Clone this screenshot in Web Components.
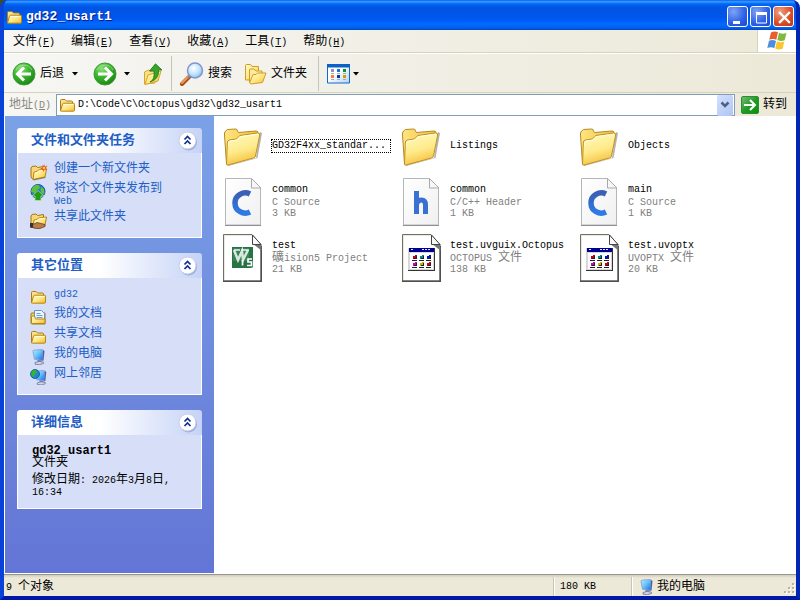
<!DOCTYPE html>
<html lang="zh-CN">
<head>
<meta charset="utf-8">
<title>gd32_usart1</title>
<style>
html, body { margin: 0; }
body {
  min-height: 100vh;
  background: linear-gradient(90deg, #3c4d2b 50%, #fff 50%);
  color: #000;
  font: 12px/12px "Liberation Mono", "Noto Sans CJK SC", monospace;
}
small { font-size: 10px; line-height: 10px; }
</style>
</head>
<body>
<xp-window>
  <title-bar slot="title">gd32_usart1</title-bar>
  <menu-bar slot="menu">
    <menu-item key="F">文件</menu-item>
    <menu-item key="E">编辑</menu-item>
    <menu-item key="V">查看</menu-item>
    <menu-item key="A">收藏</menu-item>
    <menu-item key="T">工具</menu-item>
    <menu-item key="H">帮助</menu-item>
  </menu-bar>
  <tool-bar slot="tools">
    <tool-button icon="back" drop>后退</tool-button>
    <tool-button icon="forward" drop label="前进"></tool-button>
    <tool-button icon="up" label="向上"></tool-button>
    <tool-divider></tool-divider>
    <tool-button icon="search">搜索</tool-button>
    <tool-button icon="folders">文件夹</tool-button>
    <tool-divider></tool-divider>
    <tool-button icon="views" drop label="查看"></tool-button>
  </tool-bar>
  <address-bar slot="address" path="D:\Code\C\Octopus\gd32\gd32_usart1"></address-bar>
  <side-bar slot="side">
    <task-panel heading="文件和文件夹任务">
      <task-link icon="newfolder">创建一个新文件夹</task-link>
      <task-link icon="publish">将这个文件夹发布到 <small>Web</small></task-link>
      <task-link icon="share">共享此文件夹</task-link>
    </task-panel>
    <task-panel heading="其它位置">
      <task-link icon="folder16"><small>gd32</small></task-link>
      <task-link icon="docs">我的文档</task-link>
      <task-link icon="folder16">共享文档</task-link>
      <task-link icon="computer">我的电脑</task-link>
      <task-link icon="network">网上邻居</task-link>
    </task-panel>
    <task-panel heading="详细信息">
      <folder-details name="gd32_usart1" kind="文件夹">修改日期<small>: 2026</small>年<small>3</small>月<small>8</small>日<small>,</small> <small>16:34</small></folder-details>
    </task-panel>
  </side-bar>
  <file-view slot="files">
    <file-item icon="folder" name="GD32F4xx_standar..." selected></file-item>
    <file-item icon="folder" name="Listings"></file-item>
    <file-item icon="folder" name="Objects"></file-item>
    <file-item icon="cfile" name="common" size="3 KB"><small>C Source</small></file-item>
    <file-item icon="hfile" name="common" size="1 KB"><small>C/C++ Header</small></file-item>
    <file-item icon="cfile" name="main" size="1 KB"><small>C Source</small></file-item>
    <file-item icon="uvision" name="test" size="21 KB">礦<small>ision5 Project</small></file-item>
    <file-item icon="generic" name="test.uvguix.Octopus" size="138 KB"><small>OCTOPUS </small>文件</file-item>
    <file-item icon="generic" name="test.uvoptx" size="20 KB"><small>UVOPTX </small>文件</file-item>
  </file-view>
  <status-bar slot="status">
    <span slot="count"><small>9 </small>个对象</span>
    <small slot="size">180 KB</small>
    <span slot="zone">我的电脑</span>
  </status-bar>
</xp-window>

<script>
const yellow = `<defs><linearGradient id="y" x1="0" y1="0" x2="1" y2="1"><stop offset="0" stop-color="#fffbd2"/><stop offset=".5" stop-color="#ffe887"/><stop offset="1" stop-color="#f3b92c"/></linearGradient></defs>`;
const smallFolder = `<path d="M1.500 14V3.500q0-1 1-1h3.500l1.500 1.500h5q1 0 1 1v2" fill="#fbe38c" stroke="#b07a14"/><path d="M1.500 14 3.500 7q.3-.8 1-.8h10q1 0 1 1v6q0 1-1 1H2.500q-1 0-1-.2z" fill="url(#y)" stroke="#b8860f"/><path d="M4.500 7.500h9.500" stroke="#fffbe0"/>`;
const tiltFolder = `<path d="M3 15.500 1 13V4l1-1.500 4-.5 1.500 1.500 6-1v3z" fill="#f7d777" stroke="#a87410"/><path d="M3 15.500 4 8l3-.5 1.500-1.500 8-1-1.500 8z" fill="url(#y)" stroke="#b8860f"/><path d="M5 9l2.500-.5L9 7l6-.8" fill="none" stroke="#fffbe0"/><path d="M3.500 16l12-2.500" stroke="#5e5030" stroke-opacity=".6"/>`;
const monitor = `<path d="M3 2.200Q3 1.300 4 1.200L12 .5q1 0 1 1L12.300 11.500 4.500 10.300z" fill="url(#m)" stroke="#8ba6dc"/><path d="M13 1l1.500 1-1 9.500-1.300.3z" fill="#4c5ca6"/><path d="M7.500 11l4 .6v2l-4-.3z" fill="#6f78a8"/><path d="M5 13.500q4-2 8.500-.3v1.300q-4 2-8.500.7z" fill="#d0d3ea" stroke="#707496" stroke-width=".8"/>`;
const mdefs = `<defs><linearGradient id="m" x1="0" y1="0" x2="1" y2="1"><stop offset="0" stop-color="#b8f0ff"/><stop offset=".5" stop-color="#5fc0fa"/><stop offset="1" stop-color="#1c64d8"/></linearGradient></defs>`;
const greenDisc = `<defs><radialGradient id="g" cx=".35" cy=".25" r=".85"><stop offset="0" stop-color="#8fe07a"/><stop offset=".45" stop-color="#3bb52f"/><stop offset="1" stop-color="#14800f"/></radialGradient></defs><circle cx="12" cy="12" r="11" fill="url(#g)" stroke="#3f9a38"/><path d="M4 8a9 9 0 0 1 16 0" fill="none" stroke="#b9efad" stroke-opacity=".6"/>`;
const page = `<defs><linearGradient id="p" x1="0" y1="0" x2="1" y2="1"><stop offset="0" stop-color="#fff"/><stop offset="1" stop-color="#f0f0f0"/></linearGradient><linearGradient id="b" x1="0" y1="0" x2="0" y2="1"><stop offset="0" stop-color="#3a5fb4"/><stop offset="1" stop-color="#2f7ae6"/></linearGradient></defs><path d="M6.500.500H32l9.500 9.500v37H6.500z" fill="url(#p)" stroke="#b4b7b9"/><path d="M6 47.500h36" stroke="#8c9092"/><path d="M32.500.500v9.500h9.500z" fill="#f7f7f7" stroke="#a7a9ab"/>`;
const darkPage = `<path d="M4.500.500H33l9 10V47H4.500z" fill="#fff" stroke="#6f6f67"/><path d="M5.500 46V1.500H33" fill="none" stroke="#e9e9dd"/><path d="M4 47.250h38.250V12" fill="none" stroke="#505050" stroke-width="1.500"/><path d="M33.500 1v9.500h8.500l.5 6-9-7z" fill="#777"/><path d="M33.500 1v9.500h8.500z" fill="#fafafa" stroke="#444"/>`;
const dots = [['#c00020',15,21],['#008a8a',22,21],['#0010c8',29,21],['#d000c0',15,28],['#c8b000',22,28],['#c80010',29,28]]
  .map(([c,x,y]) => `<path fill="${c}" d="M${x} ${y}h4v4h-4z"/><path fill="#fff" d="M${x} ${y}h2v1h-2z"/><path fill="#222" d="M${x+3} ${y+1}h1v3h-3v-1h2zM${x-1} ${y+5}h5v1h-5z"/>`).join('');

const ICONS = {
  folder16: [16, 16, yellow + smallFolder],
  newfolder: [18, 17, yellow + tiltFolder + `<path d="M14 0l1 2.500 2.500-1-1.500 2.500 1.500 2-2.500-.5L13 8l-.3-2.500L10 4.500l2.700-1.200L12.500.8l1.500 1z" fill="#ee5a1c"/><circle cx="14" cy="4" r="1.200" fill="#ffc35c"/>`],
  publish: [16, 17, `<circle cx="8" cy="7.500" r="7" fill="#2b7bd0" stroke="#17539a"/><path d="M2 4q3-4 7-3l1 3-3 2-2 3-4-1zM11 3l3 2 .5 5-3-1-1-3z" fill="#5fc23c"/><path d="M8 6.500l6 5.500h-3v4.500H5V12H2z" fill="#259a14" stroke="#b9e8a8" stroke-width=".7"/>`],
  share: [17, 17, yellow + tiltFolder + `<path d="M1 12h3l3-1.500 4 1 4 1v2l-5 2H6l-3-1H1z" fill="#b97d44" stroke="#5b3114" stroke-width=".7"/><path d="M0 11h3v4.500H0z" fill="#333"/>`],
  docs: [16, 16, yellow + `<path d="M1 5q0-1 1-1h13v11H2q-1 0-1-1z" fill="#f4cf60" stroke="#a87812"/><path d="M4.500 1.500h7l3 3v8h-10z" fill="#eef6ff" stroke="#6c93c8"/><path d="M6.500 4.500h4m-4 2h6m-6 2h6" stroke="#6aa0dc"/><path d="M1.500 8q0-1 1-1h2l1 3h9.500v4.500H2.500q-1 0-1-1z" fill="url(#y)" stroke="#b8860f"/>`],
  computer: [16, 16, mdefs + monitor],
  network: [17, 16, mdefs + `<g transform="translate(2.500 1) scale(.95)">${monitor}</g><circle cx="5" cy="5" r="4.500" fill="#2382d8" stroke="#124f91" stroke-width=".8"/><path d="M1 4q2-4 5-3l1 3-2 1-1 3-2-1z" fill="#38b32c"/>`],
  back: [24, 24, greenDisc + `<path d="M12 5.500 5.500 12 12 18.500M6.500 12H19" fill="none" stroke="#fff" stroke-width="3"/>`],
  forward: [24, 24, greenDisc + `<path d="M12 5.500 18.500 12 12 18.500M17.500 12H5" fill="none" stroke="#fff" stroke-width="3"/>`],
  up: [20, 22, yellow + `<path d="M1.500 21V9l4-2 2 1.500L12 7v13z" fill="#fbe08a" stroke="#d8a52c"/><path d="M2 21.500 5 12l13-4-3 10z" fill="url(#y)" stroke="#d8a52c"/><path d="M7 19q5-2 4-11H6.500L12.500.8 19 7h-3.500q1 9-8.500 12z" fill="#35a52b" stroke="#1c7618" stroke-width=".8"/>`],
  search: [24, 24, `<defs><radialGradient id="l" cx=".4" cy=".35" r=".7"><stop offset="0" stop-color="#fff"/><stop offset=".6" stop-color="#bfe3fc"/><stop offset="1" stop-color="#7fb7ee"/></radialGradient></defs><path d="M10.500 13.500 2 22" stroke="#a64d17" stroke-width="4" stroke-linecap="round"/><path d="M9.500 13.500 2 21" stroke="#f29a55" stroke-width="2" stroke-linecap="round"/><path d="M11 13l-3 3" stroke="#7f87a0" stroke-width="2"/><circle cx="15" cy="8.500" r="7.500" fill="url(#l)" stroke="#8395cf" stroke-width="1.500"/>`],
  folders: [23, 22, yellow + `<path d="M1.500 17V2.500q0-1 1-1h4l1.500 2h6.500v4L12 17z" fill="url(#y)" stroke="#cf9c28"/><path d="M5.500 19V7q0-1 1-1h3.500l2 2h6v4" fill="#fdea9e" stroke="#cf9c28"/><path d="M5.500 20 9 11.500h3l1.500-1.500h8.500l-3.500 9.500-11.500 1.500z" fill="url(#y)" stroke="#cf9c28"/>`],
  views: [24, 20, `<defs><linearGradient id="v" x1="0" y1="0" x2="1" y2="1"><stop offset=".4" stop-color="#fff"/><stop offset="1" stop-color="#b4d3f5"/></linearGradient></defs><path d="M.5.5h22v18.500H.5z" fill="url(#v)" stroke="#1268cf"/><path d="M0 0h23v3.500H0z" fill="#0c60c8"/><path d="M4 5h3v3H4z" fill="#9a8ccc"/><path d="M10 5h3v3h-3z" fill="#1672e4"/><path d="M16 5h3v3h-3z" fill="#0b9812"/><path d="M4 11h3v3H4z" fill="#ff7846"/><path d="M10 11h3v3h-3z" fill="#0b38a8"/><path d="M16 11h3v3h-3z" fill="#d0a000"/><path d="M4 9.500h3m3 0h3m3 0h3M4 15.500h3m3 0h3m3 0h3" stroke="#aaa"/>`],
  go: [18, 18, `<defs><linearGradient id="o" x1="0" y1="0" x2="1" y2="1"><stop offset="0" stop-color="#79bf79"/><stop offset=".5" stop-color="#219b24"/><stop offset="1" stop-color="#079009"/></linearGradient></defs><rect x=".5" y=".5" width="17" height="17" rx="1.500" fill="url(#o)" stroke="#2e8a36"/><path d="M9 4l5 5-5 5M13 9H3" fill="none" stroke="#fff" stroke-width="2"/>`],
  flag: [20, 20, `<path d="M4 1.500q3.500-2 7-.2L9.300 8.700q-3-1.500-7-.2z" fill="#e8602c"/><path d="M12 1.700q3.500 2 7.500.3l-1.800 7.300q-4 1.500-7.300-.3z" fill="#7fba3c"/><path d="M2 9.700q3.500-1.500 7 .2l-1.700 7.400q-3-1.800-7-.3z" fill="#4a8fe0"/><path d="M10 10.200q3.300 1.900 7.300.3l-1.700 7.300q-4 1.700-7.400-.2z" fill="#f9c62c"/>`],
  chevrons: [20, 20, `<circle cx="10.500" cy="11" r="8.500" fill="#7d8fc4" opacity=".6"/><circle cx="9.500" cy="9.500" r="8.500" fill="#fff" stroke="#c5cee8"/><path d="M6.500 8.500 9.500 5.500l3 3M6.500 13l3-3 3 3" fill="none" stroke="#10308f" stroke-width="1.700"/>`],
  folder: [48, 48, `<defs><linearGradient id="f" x1="0" y1="0" x2=".3" y2="1"><stop offset="0" stop-color="#fffbc0"/><stop offset=".6" stop-color="#ffeb8c"/><stop offset="1" stop-color="#f5c443"/></linearGradient><linearGradient id="k" x1="0" y1="0" x2="1" y2="0"><stop offset="0" stop-color="#ffe582"/><stop offset="1" stop-color="#f0c040"/></linearGradient></defs><path d="M9 44 38.500 36 43 11l-2-1-4 26-28 7z" fill="#555" opacity=".45"/><path d="M7.500 42 5.500 13V11l1-2 2-1.500 8-.5q2 0 2 2l1 1.500L37 9q2.500 0 2 2.500l-3 22z" fill="url(#k)" stroke="#b58a22"/><path d="M7.500 42.500 8.300 21q0-2.500 2-3l7-1 3.500-3.500L38.500 11q2.500-.2 2.200 2L36.500 34q-.3 1.500-2 2L9 43q-1.500.3-1.500-.5z" fill="url(#f)" stroke="#c1901f"/><path d="M9.500 24l.2-3q.2-1.700 2-2l6-.9 3.500-3.400L39 12.200" fill="none" stroke="#fffde6"/>`],
  cfile: [48, 48, page + `<path d="M31 16q-5-2.500-10 .3t-5 8.700 5 8.700 10 .3" fill="none" stroke="url(#b)" stroke-width="5.500"/>`],
  hfile: [48, 48, page + `<path d="M19.500 13v23M19.500 26q1.500-4 5-4 4 0 4 5V36" fill="none" stroke="#3971d2" stroke-width="5"/>`],
  uvision: [48, 48, darkPage + `<path d="M13 13h21v20l-2 1H13z" fill="#287344"/><path d="M14 14h16v13H14z" fill="#4b926a" opacity=".5"/><path d="M15 16l4 10 4-9 1 9 5-10" fill="none" stroke="#d9e8de" stroke-width="2.500"/><path d="M15 16h6m1 0h8" stroke="#edf4ef" stroke-width="1.500"/><path d="M23.500 26v5.500M33 25h-4v3h3.500v3.500H28" fill="none" stroke="#fff" stroke-width="1.700"/>`],
  generic: [48, 48, `<g transform="translate(1 0)">` + darkPage + `<path d="M10 14h27v23H10z" fill="#333"/><path d="M10 14h26v22H10z" fill="#d8d8d8"/><path d="M11 14h25v4H11z" fill="#000090"/><path d="M12 19h23v16H12z" fill="#fff"/><path d="M13 15.500h2m9 0h2m1 0h2m1 0h2" stroke="#e8e8ff"/>${dots}</g>`],
  min: [21, 21, `<path d="M5 14h7v3H5z" fill="#fff"/>`],
  max: [21, 21, `<path d="M5.500 6h10v10h-10z" fill="none" stroke="#fff"/><path d="M5 6.500h11" stroke="#fff" stroke-width="3"/>`],
  close: [21, 21, `<path d="M6 6l9 9M15 6l-9 9" stroke="#fff" stroke-width="2.400" stroke-linecap="square"/>`],
  down: [16, 18, `<path d="M4.500 7.500 8 11l3.500-3.500" fill="none" stroke="#4d6185" stroke-width="2.500"/>`],
  caret: [6, 4, `<path d="M0 0h6L3 3.500z"/>`],
  grip: [12, 12, [[8,0],[4,4],[8,4],[0,8],[4,8],[8,8]].map(([x,y]) => `<path d="M${x+1} ${y+1}h2v2h-2z" fill="#fff"/><path d="M${x} ${y}h2v2h-2z" fill="#b8b4a2"/>`).join('')]
};

function define(tag, css, markup) {
  customElements.define(tag, class extends HTMLElement {
    connectedCallback() {
      if (this.shadowRoot) return;
      const t = document.createElement('template');
      t.innerHTML = `<style>*{box-sizing:border-box}button{border:0;margin:0;padding:0;background:none;font:inherit;color:inherit}${css}</style>` +
        (typeof markup === 'function' ? markup(this) : markup);
      this.attachShadow({ mode: 'open' }).append(t.content.cloneNode(true));
    }
  });
}
const attr = (el, n) => el.getAttribute(n) || '';

define('xp-icon', `:host{display:inline-flex;flex:none}svg{display:block}`, el => {
  const [w, h, body] = ICONS[attr(el, 'name')];
  return `<svg aria-hidden="true" width="${w}" height="${h}" viewBox="0 0 ${w} ${h}">${body}</svg>`;
});

define('xp-window', `
:host{display:grid;grid-template:auto auto auto auto 1fr auto / 210px 1fr;min-height:100vh;box-sizing:border-box;
  border:solid #0842d8;border-width:0 4px 4px;border-color:#0842d8 #0026b8 #0018a8 #0842d8;border-radius:8px 8px 0 0;background:#0a50e0;overflow:hidden}
slot{display:block;min-width:0}
.wide{grid-column:1/-1}
.title{margin:0 -4px}
.side,.files{display:grid}`,
`<slot class="wide title" name="title"></slot><slot class="wide" name="menu"></slot><slot class="wide" name="tools"></slot>
<slot class="wide" name="address"></slot><slot class="side" name="side"></slot><slot class="files" name="files"></slot><slot class="wide" name="status"></slot>`);

define('title-bar', `
:host{display:flex;align-items:center;height:30px;box-sizing:border-box;padding:3px 6px 0;gap:4px;color:#fff;
  background:linear-gradient(#0058ee 0,#3593ff 4%,#288eff 8%,#036ffc 12%,#0262ee 16%,#0054e3 26%,#0055eb 56%,#005bf5 68%,#026afe 80%,#0062ef 92%,#0048c8 100%)}
h1{flex:1;margin:0;font-size:13px;line-height:16px;font-weight:bold;text-shadow:1px 1px #0a1883}
div{display:flex;gap:2px}
button{width:21px;height:21px;border:1px solid #fff;border-radius:3px;display:grid;place-items:center;background:radial-gradient(circle at 30% 25%,#7fa4f5,#2b5fe6 60%,#1d49c8)}
button:last-child{background:radial-gradient(circle at 30% 25%,#f0a085,#df4f27 55%,#bb3210)}`,
`<xp-icon name="folder16"></xp-icon><h1><slot></slot></h1><div><button aria-label="最小化"><xp-icon name="min"></xp-icon></button><button aria-label="最大化"><xp-icon name="max"></xp-icon></button><button aria-label="关闭"><xp-icon name="close"></xp-icon></button></div>`);

define('menu-bar', `
:host{display:flex;height:24px;box-sizing:border-box;background:linear-gradient(90deg,#f6f6f4,#ece9d8);border-bottom:1px solid #fff}
nav{display:flex;flex:1;padding:1px 0 0 1px;border-bottom:1px solid #d8d2bd}
span{display:grid;place-items:center;width:39px;background:#fff;border-left:1px solid #d8d2bd;border-bottom:1px solid #d8d2bd}`,
`<nav><slot></slot></nav><span><xp-icon name="flag"></xp-icon></span>`);

define('menu-item', `:host{display:flex}button{padding:0 8px;white-space:nowrap}small{font-size:10px;line-height:10px}`,
  el => `<button><slot></slot><small>(<u>${attr(el, 'key')}</u>)</small></button>`);

define('tool-bar', `:host{display:flex;align-items:stretch;height:40px;box-sizing:border-box;padding:1px 8px 2px;
  background:linear-gradient(#d8d2bd,#d8d2bd) 0 38px/100% 1px no-repeat,linear-gradient(90deg,#f6f6f4,#ece9d8)}`, `<slot></slot>`);

define('tool-divider', `:host{display:block;width:1px;margin:1px 8px 1px;background:#c9c5b2}`, ``);

define('tool-button', `:host{display:flex}button{display:flex;align-items:center;gap:4px;white-space:nowrap}
.drop{padding:0 8px;margin-right:7px}
:host([icon=forward]) .drop{padding:0 7px;margin-right:6px}:host([icon=search]) .main{margin-right:12px}
:host([icon=folders]) .main{margin-right:3px}:host([icon=views]) .drop{padding:0 2px}`,
  el => `<button class="main" aria-label="${attr(el, 'label') || el.textContent}"><xp-icon name="${attr(el, 'icon')}"></xp-icon><slot></slot></button>` +
    (el.hasAttribute('drop') ? `<button class="drop" aria-label="更多"><xp-icon name="caret"></xp-icon></button>` : ''));

define('address-bar', `
:host{display:flex;align-items:center;height:22px;background:linear-gradient(90deg,#f6f6f4,#ece9d8)}
label{width:52px;box-sizing:border-box;padding-left:5px;color:#8a887d;white-space:nowrap}
small{font-size:10px;line-height:10px}
.box{display:flex;align-items:center;flex:1;min-width:0;height:22px;padding:1px 1px 1px 2px;border:1px solid #7f9db9;background:#fff}
input{flex:1;min-width:0;border:0;outline:0;padding:0;margin-left:3px;font:inherit;font-size:10px;color:#000;background:none}
.box button{border-radius:2px;background:linear-gradient(135deg,#d3e0ff,#afc5f5)}
.go{display:flex;align-items:center;gap:4px;padding:0 9px 0 6px}`,
  el => `<label for="a">地址<small>(<u>D</u>)</small></label><div class="box"><xp-icon name="folder16"></xp-icon><input id="a" value="${attr(el, 'path')}"><button aria-label="展开"><xp-icon name="down"></xp-icon></button></div><button class="go"><xp-icon name="go"></xp-icon>转到</button>`);

define('side-bar', `:host{display:flex;flex-direction:column;gap:15px;box-sizing:border-box;padding:12px;border:solid #fff;border-width:0 0 1px 1px;
  background:linear-gradient(#7ba2e7,#6375d6)}`, `<slot></slot>`);

define('task-panel', `
:host{display:block}
header{display:flex;align-items:center;justify-content:space-between;height:25px;padding:0 4px 0 14px;border-radius:3px 3px 0 0;background:linear-gradient(90deg,#fff 45%,#c6d3f7)}
h2{margin:0;font-size:13px;line-height:16px;color:#215dc6}
button{display:flex}
.body{display:flex;flex-direction:column;gap:4px;padding:10px 12px;border:solid #fff;border-width:0 1px 1px;background:#d6dff7}`,
  el => `<header><h2>${attr(el, 'heading')}</h2><button aria-label="折叠"><xp-icon name="chevrons"></xp-icon></button></header><div class="body"><slot></slot></div>`);

define('task-link', `:host{display:block}
a{display:flex;align-items:flex-start;min-height:16px;color:#215dc6;text-decoration:none}
i{display:flex;width:24px;height:16px;flex:none;padding-top:1px;overflow:visible}
span{width:114px}`,
  el => `<a href="#"><i><xp-icon name="${attr(el, 'icon')}"></xp-icon></i><span><slot></slot></span></a>`);

define('folder-details', `:host{display:block;padding:0 2px}p{margin:0}strong{display:block}.date{margin-top:5px}`,
  el => `<strong>${attr(el, 'name')}</strong><p>${attr(el, 'kind')}</p><p class="date"><slot></slot></p>`);

define('file-view', `:host{display:grid;grid-template-columns:repeat(auto-fill,178px);grid-auto-rows:48px;gap:8px 0;align-content:start;box-sizing:border-box;padding:6px 5px;background:#fff}`, `<slot></slot>`);

define('file-item', `:host{display:flex;align-items:center;gap:4px;padding-right:6px;min-width:0;color:#808080}
div{flex:1;min-width:0;padding:0 1px;white-space:nowrap}
small{display:block;font-size:10px;line-height:12px}
.name{color:#000}
p{margin:0;height:12px}
:host([selected]) div{border:1px dotted #000;padding:0}`,
  el => `<xp-icon name="${attr(el, 'icon')}"></xp-icon><div><small class="name">${attr(el, 'name')}</small>` +
    (el.hasAttribute('size') ? `<p><slot></slot></p><small>${attr(el, 'size')}</small>` : '') + `</div>`);

define('status-bar', `
:host{display:flex;height:22px;box-sizing:border-box;border-top:1px solid #9a988c;background:linear-gradient(#d0ccbc,#ece9d8 3px)}
div{display:flex;align-items:center;gap:3px;margin-top:2px;white-space:nowrap}
.count{flex:1;padding-left:2px}
.size,.zone{padding-left:5px;border-left:1px solid #fff;box-shadow:-1px 0 #c9c5b2}
.size{width:78px}.zone{width:164px}
.grip{margin:auto 0 1px auto}`,
`<div class="count"><slot name="count"></slot></div><div class="size"><slot name="size"></slot></div><div class="zone"><xp-icon name="computer"></xp-icon><slot name="zone"></slot><xp-icon class="grip" name="grip"></xp-icon></div>`);
</script>
</body>
</html>
